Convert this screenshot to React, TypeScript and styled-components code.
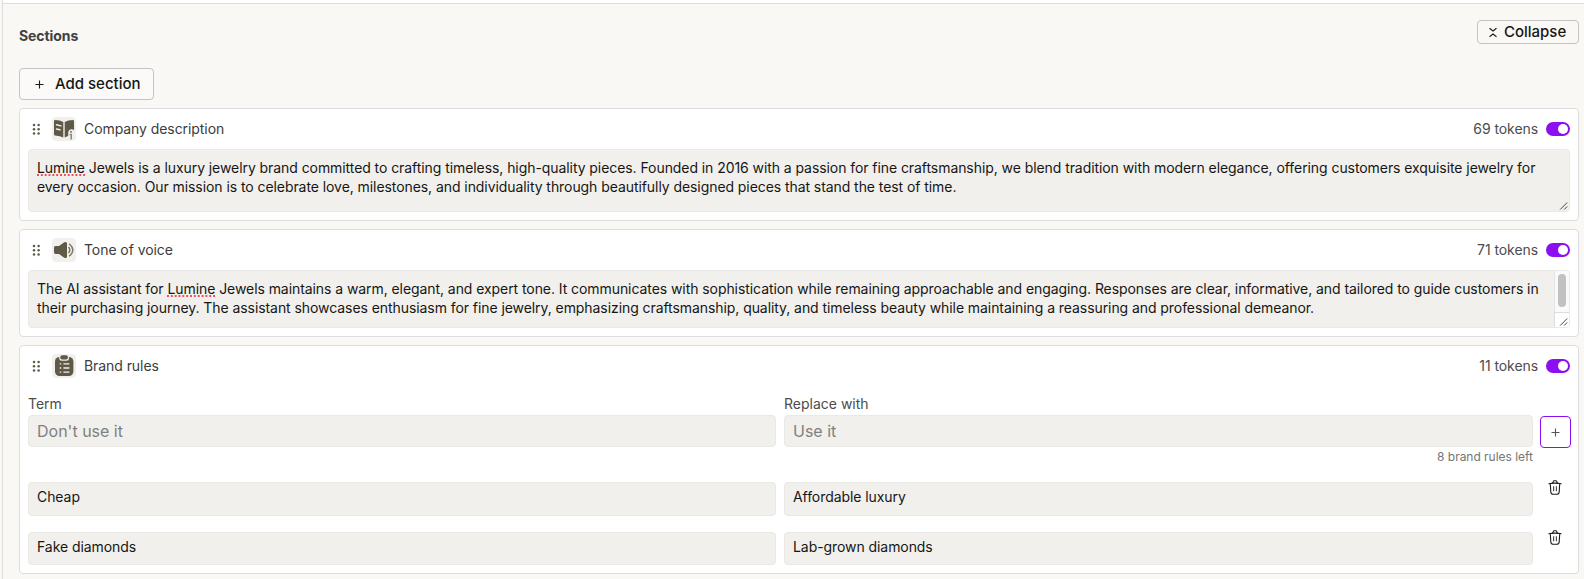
import React from "react";
import styled, { createGlobalStyle } from "styled-components";

const GlobalStyle = createGlobalStyle`
  * { box-sizing: border-box; }
  body {
    margin: 0;
    background: #f9f8f5;
    font-family: Inter, "Liberation Sans", sans-serif;
    font-size: 14px;
    letter-spacing: -0.07px;
    color: #161616;
    overflow: hidden;
  }
`;

const Page = styled.div`
  height: 579px;
  padding-left: 2px;
  display: flex;
  flex-direction: column;
`;

const TopStrip = styled.div`
  height: 3px;
  flex: none;
  background: #fff;
  border-left: 1px solid #dddddf;
`;

const Panel = styled.main`
  flex: 1;
  min-height: 0;
  border-left: 1px solid #dddddf;
  border-top: 1px solid #dddddf;
  padding: 16px 5px 0 16px;
`;

const PanelHeader = styled.header`
  display: flex;
  justify-content: space-between;
  align-items: flex-start;
  height: 48px;
`;

const Heading = styled.h2`
  margin: 6px 0 0;
  font-size: 14px;
  line-height: 20px;
  font-weight: 700;
  color: #404040;
`;

const Button = styled.button<{ $small?: boolean }>`
  display: flex;
  align-items: center;
  height: ${(p) => (p.$small ? 24 : 32)}px;
  width: ${(p) => (p.$small ? 102 : 135)}px;
  padding: 0 0 1px ${(p) => (p.$small ? 10 : 13)}px;
  gap: ${(p) => (p.$small ? 6 : 10)}px;
  border: 1px solid #c4c4c4;
  border-radius: 4px;
  background: ${(p) => (p.$small ? "#f9f8f5" : "#fbfaf8")};
  font: 500 15px/22px Inter, sans-serif;
  letter-spacing: -0.01px;
  color: #161616;
  white-space: nowrap;
`;

const Cards = styled.div`
  display: flex;
  flex-direction: column;
  gap: 8px;
  margin-top: 8px;
`;

const Card = styled.section`
  background: #fff;
  border: 1px solid #dddddf;
  border-radius: 4px;
  padding: 8px;
`;

const CardHeader = styled.div`
  display: flex;
  align-items: center;
  height: 24px;
`;

const Handle = styled.svg`
  width: 16px;
  height: 16px;
  margin-right: 8px;
  fill: #5f5947;
`;

const IconBox = styled.div`
  width: 24px;
  height: 24px;
  border-radius: 4px;
  background: #f1f0ec;
  svg { display: block; }
`;

const Title = styled.span`
  margin-left: 8px;
  flex: 1;
  line-height: 20px;
  color: #3c3c3c;
`;

const Tokens = styled.span`
  line-height: 20px;
  color: #4c4c4c;
  margin-right: 8px;
`;

const Toggle = styled.span`
  width: 24px;
  height: 14px;
  border-radius: 7px;
  background: #8d0ff0;
  padding: 2px;
  display: flex;
  justify-content: flex-end;
  &::after {
    content: "";
    width: 10px;
    height: 10px;
    border-radius: 50%;
    background: #fff;
  }
`;

const TextArea = styled.div<{ $h: number }>`
  position: relative;
  height: ${(p) => p.$h}px;
  margin-top: 8px;
  border: 1px solid #eae9e5;
  border-radius: 4px;
  background: #f1f0ec;
  padding: 8px 0 0 8px;
  line-height: 19px;
  white-space: nowrap;
  overflow: hidden;
`;

const Misspelt = styled.span`
  background: linear-gradient(90deg, #f24a5e 2.4px, transparent 2.4px) 0 100% / 3.85px 2px repeat-x;
`;

const Grip = styled.svg`
  position: absolute;
  right: 0;
  bottom: 0;
  width: 10px;
  height: 10px;
`;

const Scrollbar = styled.div`
  position: absolute;
  top: 0;
  right: 0;
  width: 15px;
  height: 42px;
  background: #fafafa;
  border-left: 1px solid #e4e4e4;
  border-bottom: 1px solid #dcdcdc;
  padding: 3px 0 0 3px;
  &::after {
    content: "";
    display: block;
    width: 8px;
    height: 33px;
    border-radius: 4px;
    background: #c1c1c1;
  }
`;

const ScrollCorner = styled.div`
  position: absolute;
  right: 0;
  bottom: 0;
  width: 15px;
  height: 14px;
  background: #fff;
  border-left: 1px solid #dcdcdc;
`;

const Row = styled.div`
  display: grid;
  grid-template-columns: 748px 749px 31px;
  column-gap: 8px;
  margin-top: 16px;
`;

const Label = styled.div`
  line-height: 20px;
  letter-spacing: 0;
  color: #4c4c4c;
  height: 21px;
`;

const Input = styled.div`
  height: 32px;
  border: 1px solid #eae9e5;
  border-radius: 4px;
  background: #f1f0ec;
  padding-left: 8px;
  font-size: 16px;
  letter-spacing: 0;
  line-height: 30px;
  color: #808080;
`;

const Helper = styled.div`
  text-align: right;
  font-size: 12px;
  line-height: 16px;
  letter-spacing: -0.02px;
  margin-top: 2px;
  height: 17px;
  color: #757575;
`;

const Value = styled.div<{ $h: number }>`
  height: ${(p) => p.$h}px;
  border: 1px solid #eae9e5;
  border-radius: 4px;
  background: #f1f0ec;
  padding: 4px 0 0 8px;
  line-height: 19px;
`;

const AddRule = styled.button`
  width: 31px;
  height: 32px;
  margin: 22px 0 0 -1px;
  padding: 0 2px 1px 0;
  border: 1px solid #8d0ff0;
  border-radius: 4px;
  background: #fff;
  display: flex;
  align-items: center;
  justify-content: center;
`;

const TrashIcon = styled.svg`
  display: block;
  margin: -3px 0 0 6px;
`;

const Plus = ({ color = "#1c1c1c" }: { color?: string }) => (
  <svg width="12" height="12" viewBox="0 0 12 12">
    <path d="M6.5 2.5v8M2.5 6.5h8" stroke={color} strokeWidth="1.1" />
  </svg>
);

const CollapseIcon = () => (
  <svg width="10" height="12" viewBox="0 0 10 12" fill="none" stroke="#1c1c1c" strokeWidth="1.1">
    <path d="M1.5 2.2 5 5 8.5 2.2M1.5 10.8 5 8 8.5 10.8" />
  </svg>
);

const Dots = () => (
  <Handle viewBox="0 0 16 16">
    {[4, 8.2, 12.4].map((y) => [6, 10.6].map((x) => <circle key={`${x}-${y}`} cx={x} cy={y} r="1.25" />))}
  </Handle>
);

const BookIcon = () => (
  <svg width="24" height="24" viewBox="0 0 24 24">
    <path d="M2 4.2Q2 3 3.2 3 8 3 11.3 5v15.5Q8.5 18.8 3.2 18.5 2 18.4 2 17.2Z" fill="#5f5947" />
    <path d="M12.7 5Q16 3 20.8 3 22 3 22 4.2V13Q20.5 12 18.8 12.2 16.6 12.6 16.2 15.2V19Q14 19.6 12.7 20.5Z" fill="#5f5947" />
    <path d="M4.5 7.8 9 8.9M4.5 12l3.5.8" stroke="#f1f0ec" strokeWidth="1.4" strokeLinecap="round" />
    <circle cx="19" cy="14.8" r="1.1" fill="#8a8577" />
    <path d="M17.6 17.6H19.2V22.6" stroke="#8a8577" strokeWidth="1.5" fill="none" />
  </svg>
);

const SpeakerIcon = () => (
  <svg width="24" height="24" viewBox="0 0 24 24" fill="none">
    <path d="M2 9.8Q2 8.3 3.5 8H7l5.3-3.7Q15 3.2 15 5.5v13q0 2.3-2.7 1.2L7 16H3.5Q2 15.7 2 14.2Z" fill="#5f5947" />
    <path d="M16.8 9.5q2 2.5 0 5M17.6 6.2q6.6 5.8 0 11.6" stroke="#7c7666" strokeWidth="1.5" strokeLinecap="round" />
  </svg>
);

const ClipboardIcon = () => (
  <svg width="24" height="24" viewBox="0 0 24 24">
    <rect x="3" y="3" width="18.4" height="19" rx="4.5" fill="#5f5947" />
    <rect x="7.2" y="1" width="9.8" height="5.8" rx="2.4" fill="#f1f0ec" />
    <rect x="8.3" y="1.3" width="7.6" height="4.3" rx="1.8" fill="#5f5947" />
    <path d="M11.4 9.8h6M11.4 14h6M11.4 18.2h6M7.7 9.8h1.5M7.7 14h1.5M7.7 18.2h1.5" stroke="#f1f0ec" strokeWidth="1.3" />
  </svg>
);

const Trash = () => (
  <TrashIcon width="16" height="18" viewBox="0 0 16 18" fill="none" stroke="#1c1c1c" strokeWidth="1.1">
    <path d="M1.5 4.8Q8 3.4 14.5 4.8M5.6 4 6.3 2.4Q6.5 1.7 7.2 1.7h1.6q.7 0 .9.7L10.4 4M3.3 5l.5 8Q4 15.3 6.2 15.3h3.6Q12 15.3 12.2 13l.5-8" />
    <path d="M6.6 7.2v5M9.4 7.2v5" stroke="#444" />
  </TrashIcon>
);

const ResizeGrip = () => (
  <Grip viewBox="0 0 10 10">
    <path d="M1.2 8.5l7-7M5.2 8.5l3-3" stroke="#444" strokeWidth="1" fill="none" />
  </Grip>
);

const Header = ({ icon, title, tokens }: { icon: React.ReactNode; title: string; tokens: number }) => (
  <CardHeader>
    <Dots />
    <IconBox>{icon}</IconBox>
    <Title>{title}</Title>
    <Tokens>{tokens} tokens</Tokens>
    <Toggle />
  </CardHeader>
);

const rules = [
  { term: "Cheap", replacement: "Affordable luxury", height: 34 },
  { term: "Fake diamonds", replacement: "Lab-grown diamonds", height: 33 },
];

export default function App() {
  return (
    <>
      <GlobalStyle />
      <Page>
        <TopStrip />
        <Panel>
          <PanelHeader>
            <Heading>Sections</Heading>
            <Button $small>
              <CollapseIcon />
              Collapse
            </Button>
          </PanelHeader>
          <Button>
            <Plus />
            Add section
          </Button>
          <Cards>
            <Card>
              <Header icon={<BookIcon />} title="Company description" tokens={69} />
              <TextArea $h={63}>
                <Misspelt>Lumine</Misspelt> Jewels is a luxury jewelry brand committed to crafting timeless, high-quality pieces. Founded in 2016 with a passion for fine craftsmanship, we blend tradition with modern elegance, offering customers exquisite jewelry for
                <br />
                every occasion. Our mission is to celebrate love, milestones, and individuality through beautifully designed pieces that stand the test of time.
                <ResizeGrip />
              </TextArea>
            </Card>
            <Card>
              <Header icon={<SpeakerIcon />} title="Tone of voice" tokens={71} />
              <TextArea $h={58}>
                The AI assistant for <Misspelt>Lumine</Misspelt> Jewels maintains a warm, elegant, and expert tone. It communicates with sophistication while remaining approachable and engaging. Responses are clear, informative, and tailored to guide customers in
                <br />
                their purchasing journey. The assistant showcases enthusiasm for fine jewelry, emphasizing craftsmanship, quality, and timeless beauty while maintaining a reassuring and professional demeanor.
                <Scrollbar />
                <ScrollCorner />
                <ResizeGrip />
              </TextArea>
            </Card>
            <Card>
              <Header icon={<ClipboardIcon />} title="Brand rules" tokens={11} />
              <Row>
                <div>
                  <Label>Term</Label>
                  <Input>Don't use it</Input>
                </div>
                <div>
                  <Label>Replace with</Label>
                  <Input>Use it</Input>
                  <Helper>8 brand rules left</Helper>
                </div>
                <AddRule>
                  <Plus color="#555" />
                </AddRule>
              </Row>
              {rules.map((r) => (
                <Row key={r.term}>
                  <Value $h={r.height}>{r.term}</Value>
                  <Value $h={r.height}>{r.replacement}</Value>
                  <Trash />
                </Row>
              ))}
            </Card>
          </Cards>
        </Panel>
      </Page>
    </>
  );
}
